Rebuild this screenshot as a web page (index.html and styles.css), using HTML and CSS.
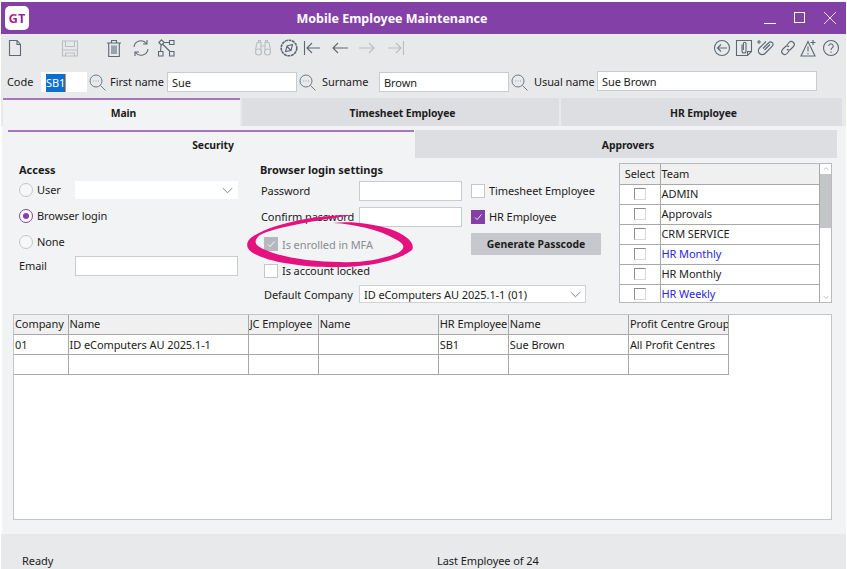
FILE: index.html
```html
<!DOCTYPE html>
<html lang="en">
<head>
<meta charset="utf-8">
<title>Mobile Employee Maintenance</title>
<link rel="stylesheet" href="styles.css">
</head>
<body>
<div class="window">
  <header class="titlebar">
    <div class="logo"><span>GT</span></div>
    <div class="title">Mobile Employee Maintenance</div>
    <div class="winctl">
      <svg class="wc" viewBox="0 0 12 12"><path d="M0 11.500h12"/></svg>
      <svg class="wc wc-max" viewBox="0 0 12 12"><rect x=".5" y=".5" width="10" height="10"/></svg>
      <svg class="wc wc-close" viewBox="0 0 12 12"><path d="M0 0l12 12M12 0L0 12"/></svg>
    </div>
  </header>

  <div class="toolbar">
    <div class="tools tools-left">
      <svg class="ic" viewBox="0 0 18 18"><path d="M3.500 1.500h7.500l3.500 4v11h-11zM11 1.500v4h3.500"/></svg>
      <svg class="ic off ml37" viewBox="0 0 18 18"><path d="M1.500 2h15v15h-15zM4.500 2v5.500h9V2M1.500 11h15M4.500 17v-3h9v3"/></svg>
      <svg class="ic ml26" viewBox="0 0 18 18"><path d="M2 4h14M6.500 4V1.500h5V4M3.700 4v13.500h10.600V4M7 6.500v8.500M9 6.500v8.500M11 6.500v8.500"/></svg>
      <svg class="ic ml9" viewBox="0 0 18 18"><path d="M2 8A7 7 0 0 1 14.500 4.500M16 10A7 7 0 0 1 3.500 13.500M15 1v4h-4M3 17v-4h4"/></svg>
      <svg class="ic ml7" viewBox="0 0 18 18"><path d="M4.500.8l2.700 2.700-2.700 2.700-2.700-2.700zM12.500 1.500h4.500v4h-4.500zM1.500 12.500h4.500v4.500h-4.500zM12.500 12.500h4.500v4.500h-4.500zM7.200 3.500h5.300M4 6.200l-.5 6.300M6 5.500l7 7"/></svg>
      <svg class="ic off ml80" viewBox="0 0 18 18"><path d="M3 3.500h4V7h4V3.500h4M3 3.500L1.500 11M15 3.500L16.500 11M7 7v4.500M11 7v4.500M4.500 3.500V1.500h2V3.500M11.500 3.500V1.500h2V3.500"/><circle cx="4.500" cy="13" r="3"/><circle cx="13.500" cy="13" r="3"/></svg>
      <svg class="ic ml8" viewBox="0 0 18 18"><circle cx="9" cy="9" r="7.800" class="ring"/><path d="M12.500 5.500l-1.500 6-5.500 1 1.500-5.500zM6.500 7l4.500 4.500"/></svg>
      <svg class="ic ml5" viewBox="0 0 18 18"><path d="M1.500 2v14M17 9H4M9 4L4 9l5 5"/></svg>
      <svg class="ic ml10" viewBox="0 0 18 18"><path d="M17 9H2M7 4L2 9l5 5"/></svg>
      <svg class="ic off ml9" viewBox="0 0 18 18"><path d="M1 9h15M11 4l5 5-5 5"/></svg>
      <svg class="ic off ml11" viewBox="0 0 18 18"><path d="M16.500 2v14M1 9h13M9 4l5 5-5 5"/></svg>
    </div>
    <div class="tools tools-right">
      <svg class="ic" viewBox="0 0 18 18"><circle cx="9" cy="9" r="7.500"/><path d="M14 9H4.500M8 5.500L4.500 9 8 12.500"/></svg>
      <svg class="ic ml4" viewBox="0 0 18 18"><path d="M1.500 1.500h15v11l-4 4h-11zM16.500 12.500h-4v4M7 5.500v6.500a2 2 0 0 0 4 0V4.500a1.300 1.300 0 0 0-2.600 0V11"/></svg>
      <svg class="ic ml4" viewBox="0 0 18 18"><path d="M6 9.500l6-6a2.500 2.500 0 0 1 3.500 3.500l-7.500 7.500a3.800 3.800 0 0 1-5.500-5.500l6.500-6.500M7.500 11l5.500-5.500M2 1v4M0 3h4"/></svg>
      <svg class="ic ml4" viewBox="0 0 18 18"><path d="M8 6l2-2.500a3 3 0 0 1 4.500 4L12 10a3 3 0 0 1-4 .3M10 12l-2 2.500a3 3 0 0 1-4.500-4L6 8a3 3 0 0 1 4-.3"/></svg>
      <svg class="ic ml3" viewBox="0 0 18 18"><path d="M8 2.500l7 14.500H1zM8 7.500v5M8 14v1.200M13 1v5M10.500 3.500h5"/></svg>
      <svg class="ic ml4" viewBox="0 0 18 18"><circle cx="9" cy="9" r="7.500"/><path d="M6.800 7a2.200 2.200 0 1 1 3.400 1.900c-.8.500-1.200 1-1.200 2M9 12.500v1.300"/></svg>
    </div>
  </div>

  <div class="keyrow">
    <span class="lbl lbl-code">Code</span>
    <div class="field f-code"><span class="sel">SB1</span></div>
    <svg class="lens" viewBox="0 0 17 17"><circle cx="7" cy="7" r="6"/><path d="M11.500 11.500l5 5M4.500 7h.6M6.800 7h.6M9 7h.6"/></svg>
    <span class="lbl lbl-first">First name</span>
    <div class="field f-name">Sue</div>
    <svg class="lens" viewBox="0 0 17 17"><circle cx="7" cy="7" r="6"/><path d="M11.500 11.500l5 5M4.500 7h.6M6.800 7h.6M9 7h.6"/></svg>
    <span class="lbl lbl-sur">Surname</span>
    <div class="field f-name">Brown</div>
    <svg class="lens" viewBox="0 0 17 17"><circle cx="7" cy="7" r="6"/><path d="M11.500 11.500l5 5M4.500 7h.6M6.800 7h.6M9 7h.6"/></svg>
    <span class="lbl lbl-usual">Usual name</span>
    <div class="field f-usual">Sue Brown</div>
  </div>

  <nav class="tabs">
    <div class="tab tab-main active">Main</div>
    <div class="tab tab-ts">Timesheet Employee</div>
    <div class="tab tab-hr">HR Employee</div>
  </nav>

  <main class="panel">
    <nav class="subtabs">
      <div class="tab sub-sec active">Security</div>
      <div class="tab sub-app">Approvers</div>
    </nav>

    <section class="form">
      <div class="access">
        <div class="head">Access</div>
        <div class="arow a-user"><span class="radio"></span><span class="alabel">User</span>
          <div class="combo combo-user"><svg class="chev" viewBox="0 0 12 7"><path d="M1 1l5 5 5-5"/></svg></div>
        </div>
        <div class="arow a-browser"><span class="radio on"></span><span>Browser login</span></div>
        <div class="arow a-none"><span class="radio"></span><span>None</span></div>
        <div class="arow a-email"><span class="alabel">Email</span><div class="field f-email"></div></div>
      </div>

      <div class="login">
        <div class="head head-login">Browser login settings</div>
        <div class="lrow"><span class="llabel">Password</span><div class="field f-pw"></div></div>
        <label class="check-row"><span class="check"></span><span>Timesheet Employee</span></label>
        <div class="lrow"><span class="llabel">Confirm password</span><div class="field f-pw"></div></div>
        <label class="check-row"><span class="check checked"><svg viewBox="0 0 14 14"><path d="M3.500 7.500l2.500 2.500 5-6"/></svg></span><span>HR Employee</span></label>
        <label class="check-row indent disabled"><span class="check dim"><svg viewBox="0 0 14 14"><path d="M3.500 7.500l2.500 2.500 5-6"/></svg></span><span>Is enrolled in MFA</span></label>
        <button class="gen" type="button">Generate Passcode</button>
        <label class="check-row indent wide"><span class="check"></span><span>Is account locked</span></label>
        <div class="lrow company"><span class="llabel clabel">Default Company</span>
          <div class="combo combo-co">ID eComputers AU 2025.1-1 (01)<svg class="chev" viewBox="0 0 12 7"><path d="M1 1l5 5 5-5"/></svg></div>
        </div>
      </div>

      <div class="teams">
        <table class="tgrid">
          <thead><tr><th class="t-sel">Select</th><th>Team</th></tr></thead>
          <tbody>
            <tr><td class="t-sel"><span class="cell-check"></span></td><td>ADMIN</td></tr>
            <tr><td class="t-sel"><span class="cell-check"></span></td><td>Approvals</td></tr>
            <tr><td class="t-sel"><span class="cell-check"></span></td><td>CRM SERVICE</td></tr>
            <tr><td class="t-sel"><span class="cell-check"></span></td><td class="link">HR Monthly</td></tr>
            <tr><td class="t-sel"><span class="cell-check"></span></td><td>HR Monthly</td></tr>
            <tr class="cut"><td class="t-sel"><span class="cell-check"></span></td><td class="link">HR Weekly</td></tr>
          </tbody>
        </table>
        <div class="scroll">
          <svg class="sarrow" viewBox="0 0 12 11"><path d="M3.500 6.500L6 4l2.500 2.500"/></svg>
          <div class="thumb"></div>
          <div class="strack"></div>
          <svg class="sarrow" viewBox="0 0 12 11"><path d="M3.500 4.500L6 7l2.500-2.500"/></svg>
        </div>
      </div>
    </section>

    <section class="gridbox">
      <table class="cgrid">
        <colgroup><col class="c1"><col class="c2"><col class="c3"><col class="c4"><col class="c5"><col class="c6"><col class="c7"></colgroup>
        <thead><tr><th>Company</th><th>Name</th><th>JC Employee</th><th>Name</th><th>HR Employee</th><th>Name</th><th>Profit Centre Group</th></tr></thead>
        <tbody>
          <tr><td>01</td><td>ID eComputers AU 2025.1-1</td><td></td><td></td><td>SB1</td><td>Sue Brown</td><td>All Profit Centres</td></tr>
          <tr><td></td><td></td><td></td><td></td><td></td><td></td><td></td></tr>
        </tbody>
      </table>
    </section>
  </main>

  <footer class="status">
    <span class="st-ready">Ready</span>
    <span class="st-count">Last Employee of 24</span>
  </footer>

  <svg class="scribble" viewBox="0 0 185 62"><path d="M112 5C80 5 35 12 12 27 4 33 6 40 17 45 35 54 75 58 100 57 130 57 160 50 172 40 176 33 165 24 150 19 130 13 110 11 93 13 115 14 140 20 155 29 165 34 166 38 158 43 140 50 120 53 100 52 75 52 45 48 28 41 15 36 12 32 20 25 35 17 75 11 112 5Z"/></svg>
</div>
</body>
</html>
```
FILE: styles.css
```css
* { box-sizing: border-box; }
html, body { margin: 0; padding: 0; background: #fff; }
body {
  width: 847px;
  height: 569px;
  overflow: hidden;
  font-family: "Noto Sans", "Open Sans", "Liberation Sans", sans-serif;
  font-size: 11px;
  letter-spacing: -0.08px;
  color: #1c1c1c;
}
.window {
  position: relative;
  display: flex;
  flex-direction: column;
  height: 569px;
  margin: 0 1px;
  padding-top: 2px;
}

/* title bar */
.titlebar {
  display: flex;
  align-items: center;
  height: 32px;
  flex: none;
  background: #8340a7;
  padding-left: 4px;
}
.logo {
  width: 24px;
  height: 24px;
  background: #fff;
  border-radius: 5px;
  display: flex;
  align-items: center;
  justify-content: center;
  flex: none;
  font-weight: 700;
  font-size: 13px;
}
.logo span {
  color: #a51b9b;
  background: linear-gradient(90deg, #c2127f, #7d2bb0);
  -webkit-background-clip: text;
  background-clip: text;
  -webkit-text-fill-color: transparent;
}
.title {
  flex: none;
  width: 726px;
  text-align: center;
  color: #fff;
  font-weight: 700;
  font-size: 12.5px;
  letter-spacing: 0;
}
.winctl { display: flex; align-items: center; gap: 18px; margin-left: 9px; }
.wc { width: 12px; height: 12px; fill: none; stroke: #fff; stroke-width: 1; flex: none; }
.wc-close { stroke: #e9dff0; }

/* toolbar */
.toolbar {
  height: 36px;
  flex: none;
  display: flex;
  justify-content: space-between;
  padding: 5px 6px 0 5px;
  background: #e8e9eb;
}
.tools { display: flex; height: 18px; }
.ic { width: 18px; height: 18px; flex: none; fill: none; stroke: #5d6874; stroke-width: 1.1; }
.ic.off { stroke: #b9bec3; }
.ic .ring { stroke-dasharray: 3 .6; stroke-width: 1.6; }
.ml3 { margin-left: 3px; }
.ml4 { margin-left: 4px; }
.ml5 { margin-left: 5px; }
.ml7 { margin-left: 7px; }
.ml8 { margin-left: 8px; }
.ml9 { margin-left: 9px; }
.ml10 { margin-left: 10px; }
.ml11 { margin-left: 11px; }
.ml26 { margin-left: 26px; }
.ml37 { margin-left: 37px; }
.ml80 { margin-left: 79px; }

/* key fields */
.keyrow {
  height: 28px;
  flex: none;
  display: flex;
  align-items: flex-start;
  padding: 2px 0 0 6px;
  background: #e8e9eb;
}
.lbl { line-height: 17px; padding-top: 1px; flex: none; }
.lbl-code { width: 34px; }
.lbl-first { margin-left: 4px; width: 57px; }
.lbl-sur { margin-left: 6px; width: 57px; }
.lbl-usual { margin-left: 6px; width: 63px; }
.field {
  background: #fff;
  border: 1px solid #c8cbcf;
  height: 20px;
  line-height: 19px;
  padding: 0 4px;
  flex: none;
  white-space: nowrap;
}
.f-code { width: 46px; border-color: #fff; }
.sel { display: inline-block; background: #0a6fd1; color: #fff; line-height: 17px; height: 18px; border-right: 1px solid #e38a3a; }
.f-name { width: 130px; }
.f-usual { width: 220px; margin-top: -1px; }
.lens { width: 17px; height: 17px; flex: none; margin: 2px 0 0 2px; fill: none; stroke: #6f7a85; stroke-width: 1; }

/* tabs */
.tabs {
  height: 28px;
  flex: none;
  display: flex;
  gap: 2px;
  padding-left: 2px;
  background: #e8e9eb;
}
.tab {
  display: flex;
  align-items: center;
  justify-content: center;
  background: #dcdee1;
  font-weight: 700;
  font-size: 10.4px;
  height: 28px;
  padding: 2px 0 0 4px;
  color: #1c1c1c;
}
.tab.active { background: #f2f3f5; border-top: 2px solid #a674c1; padding-top: 0; }
.tab-main { width: 237px; }
.tab-ts { width: 317px; }
.tab-hr { width: 281px; }

.panel {
  height: 408px;
  flex: none;
  background: #f2f3f5;
  margin-left: 1px;
  padding-top: 4px;
}
.subtabs { display: flex; gap: 1px; padding-left: 6px; }
.sub-sec { width: 406px; }
.sub-app { width: 422px; }

/* form */
.form { display: flex; height: 156px; padding: 5px 0 0 17px; }
.head { font-weight: 700; font-size: 11px; line-height: 14px; letter-spacing: 0; }
.access { width: 219px; flex: none; display: flex; flex-direction: column; }
.arow { display: flex; align-items: center; }
.arow > span:not(.radio), .check-row > span:not(.check), .llabel { padding-bottom: 2px; }
.a-user { height: 18px; margin-top: 4px; }
.a-browser { height: 20px; margin-top: 7px; }
.a-none { height: 20px; margin-top: 6px; }
.a-email { height: 20px; margin-top: 4px; }
.alabel { flex: none; }
.radio {
  width: 14px;
  height: 14px;
  border-radius: 50%;
  border: 1px solid #c4c6ca;
  background: #f7f7f8;
  margin-right: 4px;
  flex: none;
  display: flex;
  align-items: center;
  justify-content: center;
}
.radio.on { border-color: #8340a7; background: #fff; }
.radio.on::after { content: ""; width: 6px; height: 6px; border-radius: 50%; background: #8340a7; }
.a-user .alabel { width: 38px; }
.a-email .alabel { width: 56px; }
.combo {
  background: #fff;
  display: flex;
  align-items: center;
  justify-content: space-between;
  white-space: nowrap;
}
.combo-user { width: 163px; height: 18px; padding-right: 5px; justify-content: flex-end; }
.chev { width: 11px; height: 7px; fill: none; stroke: #6d747c; stroke-width: 1; flex: none; }
.f-email { width: 163px; }

.login {
  width: 341px;
  margin-left: 22px;
  flex: none;
  display: grid;
  grid-template-columns: 211px 130px;
  grid-template-rows: 18px 26px 26px 28px 24px 18px;
}
.lrow { display: flex; align-items: center; height: 20px; }
.llabel { width: 99px; padding-left: 1px; flex: none; white-space: nowrap; }
.f-pw { width: 103px; }
.check-row { display: flex; align-items: center; height: 20px; gap: 4px; white-space: nowrap; }
.check {
  width: 14px;
  height: 14px;
  flex: none;
  background: #fff;
  border: 1px solid #c4c6ca;
  display: flex;
}
.check svg { width: 100%; height: 100%; fill: none; stroke: #fff; stroke-width: 1; }
.check.checked { background: #8340a7; border-color: #8340a7; }
.check.dim { background: #b5b8bd; border-color: #b5b8bd; }
.indent { padding-left: 4px; }
.indent.disabled { height: 22px; color: #8a8d92; }
.indent.disabled > span:not(.check) { padding-bottom: 0; }
.gen {
  width: 130px;
  height: 22px;
  border: 0;
  padding: 0;
  background: #c6c8cd;
  font: inherit;
  font-size: 10.4px;
  font-weight: 700;
  color: #1c1c1c;
}
.head-login { grid-column: 1 / 3; }
.company { grid-column: 1 / 3; height: 18px; }
.clabel { width: 95px; margin-left: 4px; padding: 0; }
.combo-co { width: 227px; height: 18px; border: 1px solid #d0d2d6; padding: 0 4px; }

/* team list */
.teams {
  margin-left: 18px;
  width: 213px;
  height: 140px;
  flex: none;
  display: flex;
  background: #fff;
  border: 1px solid #b8b9bd;
  overflow: hidden;
}
table { border-collapse: collapse; table-layout: fixed; }
.tgrid { width: 200px; flex: none; }
th, td {
  border: 1px solid #a8a8a8;
  height: 20px;
  padding: 0 0 0 1px;
  font-weight: 400;
  text-align: left;
  white-space: nowrap;
  overflow: hidden;
  line-height: 18px;
}
th { background: #f0f0f0; }
.tgrid tr > :first-child { border-left: 0; }
.tgrid tr:first-child > * { border-top: 0; height: 20px; }
.t-sel { width: 40px; text-align: center; padding: 0; }
.tgrid th.t-sel { text-align: center; }
.cell-check {
  display: block;
  width: 12px;
  height: 12px;
  margin: 0 auto;
  background: #fff;
  border: 1px solid #d8d8d8;
  border-top-color: #8d8d8d;
  border-left-color: #8d8d8d;
}
.link { color: #2a1fe0; }
.scroll { width: 12px; flex: none; display: flex; flex-direction: column; }
.sarrow { width: 12px; height: 10px; flex: none; fill: none; stroke: #b4b7bb; stroke-width: 1; }
.thumb { height: 54px; flex: none; background: #c3c5c9; }
.strack { flex: 1; background: #fff; }

/* company grid */
.gridbox {
  margin-left: 11px;
  width: 819px;
  height: 206px;
  background: #fff;
  border: 1px solid #c4c5cb;
}
.cgrid { width: 715px; }
.cgrid tr > :first-child { border-left: 0; }
.cgrid th, .cgrid td { line-height: 16px; vertical-align: top; }
.cgrid thead tr > * { border-top: 0; height: 19px; padding-top: 1px; }
.cgrid tbody td { padding-top: 2px; }
.c1 { width: 54px; }
.c2 { width: 180px; }
.c3 { width: 70px; }
.c4 { width: 120px; }
.c5 { width: 70px; }
.c6 { width: 120px; }
.c7 { width: 100px; }

/* status */
.status {
  flex: 1;
  display: flex;
  align-items: flex-end;
  background: #e8e9eb;
  padding: 0 0 1px 21px;
  line-height: 15px;
}
.st-ready { width: 415px; }
.scribble {
  position: absolute;
  left: 239px;
  top: 210px;
  width: 185px;
  height: 62px;
  fill: #e4117f;
  pointer-events: none;
}
```
